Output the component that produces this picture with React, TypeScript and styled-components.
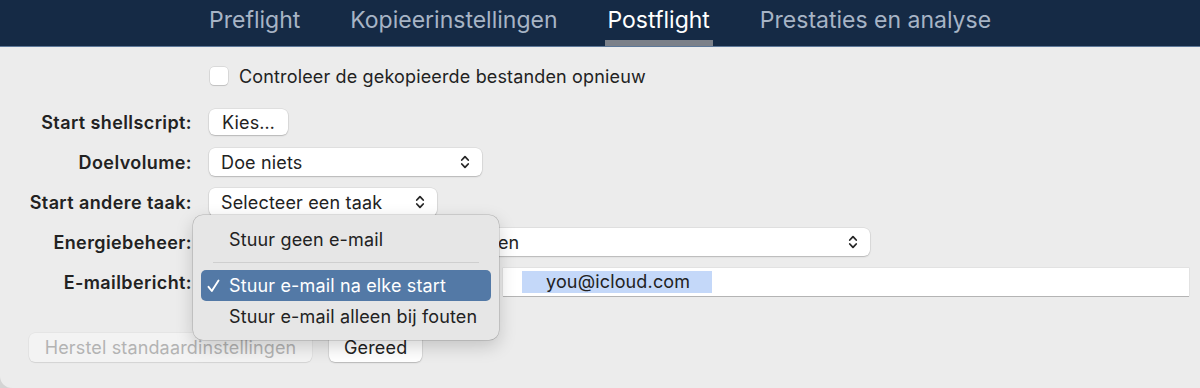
import React, { FC } from 'react'
import styled, { createGlobalStyle } from 'styled-components'

const GlobalStyle = createGlobalStyle`
  html, body {
    margin: 0;
    padding: 0;
    background: #d4d4d4;
  }
  body {
    font-family: Inter, "Noto Sans", "Liberation Sans", sans-serif;
    color: #222;
    -webkit-font-smoothing: antialiased;
  }
`

const tabs = ['Preflight', 'Kopieerinstellingen', 'Postflight', 'Prestaties en analyse']

const Stepper: FC = () => (
  <svg width="10" height="16" viewBox="0 0 10 16" fill="none">
    <path d="M1.8 6 L5 2.6 L8.2 6" stroke="#262626" strokeWidth="1.8" strokeLinecap="round" strokeLinejoin="round" />
    <path d="M1.8 10 L5 13.4 L8.2 10" stroke="#262626" strokeWidth="1.8" strokeLinecap="round" strokeLinejoin="round" />
  </svg>
)

const CheckMark: FC = () => (
  <svg width="13" height="14" viewBox="0 0 13 14" fill="none">
    <path d="M1.5 7.8 L4.8 12 L11.5 1.5" stroke="#ffffff" strokeWidth="1.9" strokeLinecap="round" strokeLinejoin="round" />
  </svg>
)

type SelectProps = { value?: string; width: number }

const Select: FC<SelectProps> = ({ value, width }) => (
  <SelectStyles $width={width}>
    <SelectText>{value}</SelectText>
    <Stepper />
  </SelectStyles>
)

const App: FC = () => {
  return (
    <Window>
      <GlobalStyle />
      <Header>
        {tabs.map((t) => (
          <Tab key={t} $active={t === 'Postflight'}>
            {t}
          </Tab>
        ))}
      </Header>
      <Body>
        <CheckRow>
          <Checkbox />
          <span>Controleer de gekopieerde bestanden opnieuw</span>
        </CheckRow>
        <Form>
          <Label>Start shellscript:</Label>
          <Field>
            <PushButton>Kies…</PushButton>
          </Field>
          <Label>Doelvolume:</Label>
          <Field>
            <Select value="Doe niets" width={273} />
          </Field>
          <Label>Start andere taak:</Label>
          <Field>
            <Select value="Selecteer een taak" width={228} />
          </Field>
          <Label>Energiebeheer:</Label>
          <Field>
            <Select value="Sluimer als geen taken meer lopen" width={661} />
          </Field>
          <Label>E-mailbericht:</Label>
          <Field>
            <Select width={285} />
            <TextField>
              <Selection>you@icloud.com</Selection>
            </TextField>
          </Field>
        </Form>
        <Footer>
          <PushButton disabled $wide>
            Herstel standaardinstellingen
          </PushButton>
          <PushButton $tall>Gereed</PushButton>
        </Footer>
        <Menu>
          <MenuItem>Stuur geen e-mail</MenuItem>
          <Separator />
          <MenuItem $selected>
            <Check>
              <CheckMark />
            </Check>
            Stuur e-mail na elke start
          </MenuItem>
          <MenuItem>Stuur e-mail alleen bij fouten</MenuItem>
        </Menu>
      </Body>
    </Window>
  )
}

const Window = styled.div`
  width: 1200px;
  height: 388px;
  overflow: hidden;
  background: #ececec;
  border-bottom-left-radius: 12px;
`

const Header = styled.div`
  display: flex;
  align-items: stretch;
  gap: 44px;
  height: 46px;
  padding-left: 206px;
  background: #152a45;
  border-bottom: 1px solid #5d7899;
`

const Tab = styled.div<{ $active?: boolean }>`
  display: flex;
  align-items: flex-start;
  padding: 6px 3px 0;
  font-size: 23px;
  color: ${(p) => (p.$active ? '#ffffff' : '#a7b4c5')};
  border-bottom: 6px solid ${(p) => (p.$active ? '#7b8089' : 'transparent')};
`

const Body = styled.div`
  position: relative;
  padding-top: 15px;
`

const CheckRow = styled.label`
  display: flex;
  align-items: center;
  gap: 11px;
  height: 28px;
  margin-left: 210px;
  margin-bottom: 18px;
  font-size: 18px;
  letter-spacing: 0.15px;
`

const Checkbox = styled.span`
  width: 18px;
  height: 18px;
  border-radius: 4px;
  background: #ffffff;
  box-shadow: 0 0 0 0.5px rgba(0, 0, 0, 0.15), 0 1px 1px rgba(0, 0, 0, 0.12);
`

const Form = styled.div`
  display: grid;
  grid-template-columns: 192px 1fr;
  grid-auto-rows: 28px;
  column-gap: 17px;
  row-gap: 12px;
`

const Label = styled.div`
  display: flex;
  align-items: center;
  justify-content: flex-end;
  font-size: 18px;
  font-weight: 600;
  letter-spacing: 0.4px;
  color: #222;
`

const Field = styled.div`
  display: flex;
  align-items: center;
  gap: 9px;
`

const SelectStyles = styled.div<{ $width: number }>`
  display: flex;
  align-items: center;
  justify-content: space-between;
  box-sizing: border-box;
  width: ${(p) => p.$width}px;
  height: 28px;
  padding: 0 12px 0 12px;
  background: #ffffff;
  border-radius: 6px;
  box-shadow: 0 0 0 0.5px rgba(0, 0, 0, 0.1), 0 1px 1.5px rgba(0, 0, 0, 0.18);
  font-size: 18px;
  letter-spacing: 0.15px;
`

const SelectText = styled.span`
  white-space: nowrap;
`

const PushButton = styled.button<{ $wide?: boolean; $tall?: boolean }>`
  box-sizing: border-box;
  height: ${(p) => (p.$wide || p.$tall ? 29 : 26)}px;
  padding: 0 ${(p) => (p.$tall ? 15 : 13)}px;
  border: none;
  border-radius: 6px;
  background: #ffffff;
  color: #222;
  font-family: inherit;
  font-size: 18px;
  letter-spacing: 0.15px;
  white-space: nowrap;
  box-shadow: 0 0 0 0.5px rgba(0, 0, 0, 0.1), 0 1px 1.5px rgba(0, 0, 0, 0.18);
  &:disabled {
    background: #f3f3f3;
    color: #b3b3b3;
    box-shadow: 0 0 0 0.5px rgba(0, 0, 0, 0.06), 0 1px 1px rgba(0, 0, 0, 0.08);
  }
`

const TextField = styled.div`
  display: flex;
  align-items: center;
  width: 667px;
  height: 28px;
  padding-left: 19px;
  background: #ffffff;
  box-shadow: 0 0 0 0.5px rgba(0, 0, 0, 0.08), 0 1px 0 rgba(0, 0, 0, 0.2);
  font-size: 18px;
  letter-spacing: 0.15px;
`

const Selection = styled.span`
  padding: 1px 22px 1px 24px;
  background: #c4d8f9;
  line-height: 20px;
`

const Footer = styled.div`
  display: flex;
  gap: 17px;
  margin-top: 37px;
  padding-left: 29px;
  & > button:first-child {
    width: 283px;
  }
`

const Menu = styled.div`
  position: absolute;
  left: 193px;
  top: 168px;
  box-sizing: border-box;
  width: 306px;
  height: 125px;
  padding: 9px 8px 8px;
  background: #e6e6e6;
  border-radius: 10px;
  box-shadow: 0 0 0 0.5px rgba(0, 0, 0, 0.22), 0 6px 18px rgba(0, 0, 0, 0.18);
`

const MenuItem = styled.div<{ $selected?: boolean }>`
  position: relative;
  display: flex;
  align-items: center;
  height: 31px;
  padding-left: 28px;
  border-radius: 5px;
  font-size: 18px;
  letter-spacing: 0.15px;
  white-space: nowrap;
  background: ${(p) => (p.$selected ? '#5379a6' : 'transparent')};
  color: ${(p) => (p.$selected ? '#ffffff' : '#222')};
`

const Check = styled.span`
  position: absolute;
  left: 6px;
  top: 9px;
  display: flex;
`

const Separator = styled.div`
  height: 1px;
  margin: 7px 12px 7px;
  background: #cfcfcf;
`

export default App
